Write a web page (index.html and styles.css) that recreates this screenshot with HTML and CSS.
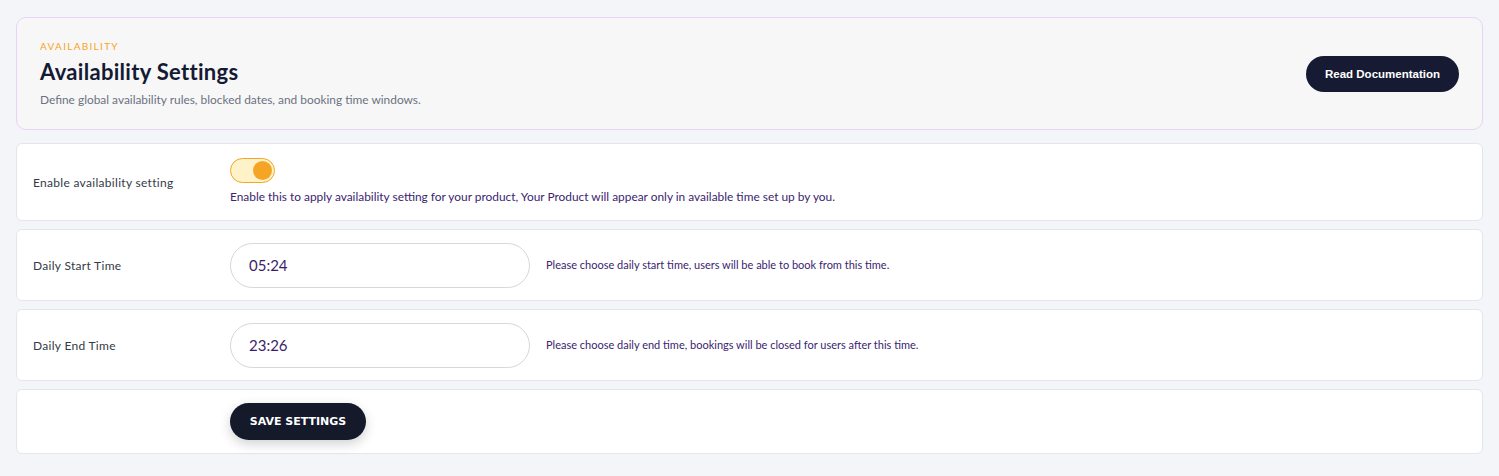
FILE: index.html
```html
<!DOCTYPE html>
<html lang="en">
<head>
  <meta charset="UTF-8">
  <meta name="viewport" content="width=device-width, initial-scale=1.0">
  <title>Availability Settings</title>
  <link rel="stylesheet" href="styles.css">
</head>
<body>
  <div class="wrap">
    <div class="page-head">
      <div class="head-text">
        <span class="eyebrow">AVAILABILITY</span>
        <h1>Availability Settings</h1>
        <p>Define global availability rules, blocked dates, and booking time windows.</p>
      </div>
      <a class="doc-btn" href="#">Read Documentation</a>
    </div>

    <div class="row first">
      <label class="row-label">Enable availability setting</label>
      <div class="row-field stack">
        <label class="toggle">
          <input type="checkbox" checked>
          <span class="track"><span class="knob"></span></span>
        </label>
        <span class="help big">Enable this to apply availability setting for your product, Your Product will appear only in available time set up by you.</span>
      </div>
    </div>

    <div class="row">
      <label class="row-label">Daily Start Time</label>
      <div class="row-field">
        <input class="time-input" type="text" value="05:24">
        <span class="help">Please choose daily start time, users will be able to book from this time.</span>
      </div>
    </div>

    <div class="row">
      <label class="row-label">Daily End Time</label>
      <div class="row-field">
        <input class="time-input" type="text" value="23:26">
        <span class="help">Please choose daily end time, bookings will be closed for users after this time.</span>
      </div>
    </div>

    <div class="row save-row">
      <span class="row-label"></span>
      <div class="row-field">
        <button class="save-btn">SAVE SETTINGS</button>
      </div>
    </div>
  </div>
</body>
</html>
```

FILE: styles.css
```css
body {
  margin: 0;
  background: #f4f5f9;
  font-family: Lato, "Open Sans", sans-serif;
  color: #1f2937;
}
.wrap {
  padding: 17px 16px 20px;
  display: flex;
  flex-direction: column;
  gap: 8px;
}

/* header card */
.page-head {
  display: flex;
  align-items: center;
  justify-content: space-between;
  height: 113px;
  box-sizing: border-box;
  background: #f7f7f8;
  border: 1px solid #e8d3f7;
  border-radius: 10px;
  padding: 0 23px;
  margin-bottom: 5px;
}
.eyebrow {
  display: block;
  font-size: 10px;
  line-height: 12px;
  letter-spacing: 1.3px;
  color: #f5a524;
}
.page-head h1 {
  margin: 6px 0 6px;
  font-size: 22px;
  line-height: 28px;
  letter-spacing: 0.3px;
  font-weight: 700;
  color: #151a33;
}
.page-head p {
  margin: 0;
  font-size: 11.9px;
  line-height: 16px;
  color: #6b7280;
}
.doc-btn {
  background: #161a33;
  color: #fff;
  text-decoration: none;
  font-family: "Liberation Sans", Arial, sans-serif;
  font-weight: 700;
  font-size: 11.5px;
  height: 36px;
  width: 153px;
  display: flex;
  align-items: center;
  justify-content: center;
  border-radius: 18px;
}

/* setting rows */
.row {
  display: flex;
  align-items: center;
  background: #fff;
  border: 1px solid #e4e6ec;
  border-radius: 6px;
  height: 72px;
  box-sizing: border-box;
}
.row.first {
  height: 78px;
}
.row.save-row {
  height: 65px;
}
.row-label {
  width: 197px;
  flex-shrink: 0;
  padding-left: 16px;
  font-size: 12px;
  letter-spacing: 0.3px;
  color: #343a46;
}
.row-field {
  display: flex;
  align-items: center;
  gap: 16px;
}
.row-field.stack {
  flex-direction: column;
  align-items: flex-start;
  gap: 7px;
  margin-top: -3px;
}
.help {
  font-size: 11px;
  line-height: 14px;
  color: #3b2470;
}
.help.big {
  font-size: 11.9px;
}
.toggle input {
  display: none;
}
.track {
  display: flex;
  align-items: center;
  justify-content: flex-end;
  width: 45px;
  height: 25px;
  box-sizing: border-box;
  border: 1px solid #f5a524;
  border-radius: 13px;
  background: #fdf2c8;
  padding: 2px;
}
.knob {
  width: 19px;
  height: 19px;
  border-radius: 50%;
  background: #f5a524;
}
.time-input {
  width: 300px;
  height: 45px;
  box-sizing: border-box;
  border: 1px solid #d6d6de;
  border-radius: 23px;
  padding: 0 18px;
  font-family: Lato, sans-serif;
  font-size: 15px;
  color: #3b1e6b;
  background: #fff;
  outline: none;
}
.save-btn {
  background: #141a2a;
  color: #fff;
  border: none;
  height: 37px;
  width: 136px;
  border-radius: 19px;
  font-family: "DejaVu Sans", sans-serif;
  font-weight: 700;
  font-size: 11px;
  box-shadow: 0 4px 12px rgba(0, 0, 0, 0.18);
  cursor: pointer;
}
```
